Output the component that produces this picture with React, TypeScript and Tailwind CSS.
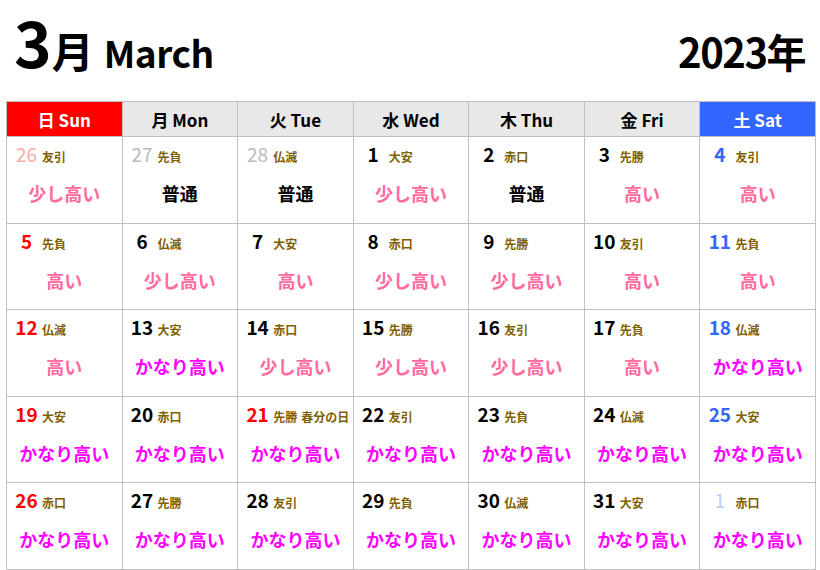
type Cell = {
  d: number
  rk: string
  lv: string
  col: string
  bold?: boolean
  note?: string
}

const RED = 'text-[#ff0000]'
const BLUE = 'text-[#3366ff]'
const BLACK = 'text-black'

const weeks: Cell[][] = [
  [
    { d: 26, rk: '友引', lv: '少し高い', col: 'text-[#ffaaaa]' },
    { d: 27, rk: '先負', lv: '普通', col: 'text-[#bbbbbb]' },
    { d: 28, rk: '仏滅', lv: '普通', col: 'text-[#bbbbbb]' },
    { d: 1, rk: '大安', lv: '少し高い', col: BLACK, bold: true },
    { d: 2, rk: '赤口', lv: '普通', col: BLACK, bold: true },
    { d: 3, rk: '先勝', lv: '高い', col: BLACK, bold: true },
    { d: 4, rk: '友引', lv: '高い', col: BLUE, bold: true },
  ],
  [
    { d: 5, rk: '先負', lv: '高い', col: RED, bold: true },
    { d: 6, rk: '仏滅', lv: '少し高い', col: BLACK, bold: true },
    { d: 7, rk: '大安', lv: '高い', col: BLACK, bold: true },
    { d: 8, rk: '赤口', lv: '少し高い', col: BLACK, bold: true },
    { d: 9, rk: '先勝', lv: '少し高い', col: BLACK, bold: true },
    { d: 10, rk: '友引', lv: '高い', col: BLACK, bold: true },
    { d: 11, rk: '先負', lv: '高い', col: BLUE, bold: true },
  ],
  [
    { d: 12, rk: '仏滅', lv: '高い', col: RED, bold: true },
    { d: 13, rk: '大安', lv: 'かなり高い', col: BLACK, bold: true },
    { d: 14, rk: '赤口', lv: '少し高い', col: BLACK, bold: true },
    { d: 15, rk: '先勝', lv: '少し高い', col: BLACK, bold: true },
    { d: 16, rk: '友引', lv: '少し高い', col: BLACK, bold: true },
    { d: 17, rk: '先負', lv: '高い', col: BLACK, bold: true },
    { d: 18, rk: '仏滅', lv: 'かなり高い', col: BLUE, bold: true },
  ],
  [
    { d: 19, rk: '大安', lv: 'かなり高い', col: RED, bold: true },
    { d: 20, rk: '赤口', lv: 'かなり高い', col: BLACK, bold: true },
    { d: 21, rk: '先勝', lv: 'かなり高い', col: RED, bold: true, note: '春分の日' },
    { d: 22, rk: '友引', lv: 'かなり高い', col: BLACK, bold: true },
    { d: 23, rk: '先負', lv: 'かなり高い', col: BLACK, bold: true },
    { d: 24, rk: '仏滅', lv: 'かなり高い', col: BLACK, bold: true },
    { d: 25, rk: '大安', lv: 'かなり高い', col: BLUE, bold: true },
  ],
  [
    { d: 26, rk: '赤口', lv: 'かなり高い', col: RED, bold: true },
    { d: 27, rk: '先勝', lv: 'かなり高い', col: BLACK, bold: true },
    { d: 28, rk: '友引', lv: 'かなり高い', col: BLACK, bold: true },
    { d: 29, rk: '先負', lv: 'かなり高い', col: BLACK, bold: true },
    { d: 30, rk: '仏滅', lv: 'かなり高い', col: BLACK, bold: true },
    { d: 31, rk: '大安', lv: 'かなり高い', col: BLACK, bold: true },
    { d: 1, rk: '赤口', lv: 'かなり高い', col: 'text-[#bbccff]' },
  ],
]

const heads = [
  { t: '日 Sun', cls: 'bg-[#ff0000] text-white' },
  { t: '月 Mon', cls: 'bg-[#e8e8e8] text-black' },
  { t: '火 Tue', cls: 'bg-[#e8e8e8] text-black' },
  { t: '水 Wed', cls: 'bg-[#e8e8e8] text-black' },
  { t: '木 Thu', cls: 'bg-[#e8e8e8] text-black' },
  { t: '金 Fri', cls: 'bg-[#e8e8e8] text-black' },
  { t: '土 Sat', cls: 'bg-[#3366ff] text-white' },
]

// colour for the level label
function lvColor(lv: string) {
  if (lv === 'かなり高い') return 'text-[#ff00ff]'
  if (lv === '普通') return 'text-black'
  return 'text-[#ff6a9f]'
}

export default function App() {
  return (
    <div className="w-[820px] h-[570px] bg-white px-[6px] font-['Noto_Sans_CJK_JP',sans-serif] overflow-hidden">
      {/* title */}
      <div className="flex items-baseline justify-between h-[101px] pt-[2px] pl-[8px] pr-[9px] text-black font-bold leading-none">
        <div className="flex items-baseline">
          <span className="text-[64px] leading-[1.2]">3</span>
          <span className="text-[42px]">月</span>
          <span className="text-[37px] ml-[10px] tracking-[-0.5px]">March</span>
        </div>
        <span className="text-[40px] tracking-[-1.5px]">2023年</span>
      </div>

      <table className="w-[810px] table-fixed border-collapse">
        <thead>
          <tr className="h-[35px]">
            {heads.map((h) => (
              <th key={h.t} className={`border border-[#c0c0c0] text-[17px] leading-none font-bold ${h.cls}`}>
                {h.t}
              </th>
            ))}
          </tr>
        </thead>
        <tbody>
          {weeks.map((w, i) => (
            <tr key={i} className="h-[86.6px]">
              {w.map((c, j) => (
                <td key={j} className="border border-[#c0c0c0] align-top p-0">
                  <div className="flex flex-col">
                    <div className="flex items-baseline pt-[7px] pl-[4px] whitespace-nowrap leading-none">
                      <span className={`w-[31px] text-center text-[19px] ${c.bold ? 'font-bold' : 'font-normal'} ${c.col}`}>
                        {c.d}
                      </span>
                      <span className="text-[12px] font-bold text-[#7f6000]">{c.rk}</span>
                      {c.note && <span className="text-[12px] font-bold text-[#7f6000] ml-[4px]">{c.note}</span>}
                    </div>
                    <div className={`text-center text-[18px] leading-none font-bold mt-[21px] ${lvColor(c.lv)}`}>{c.lv}</div>
                  </div>
                </td>
              ))}
            </tr>
          ))}
        </tbody>
      </table>
    </div>
  )
}
